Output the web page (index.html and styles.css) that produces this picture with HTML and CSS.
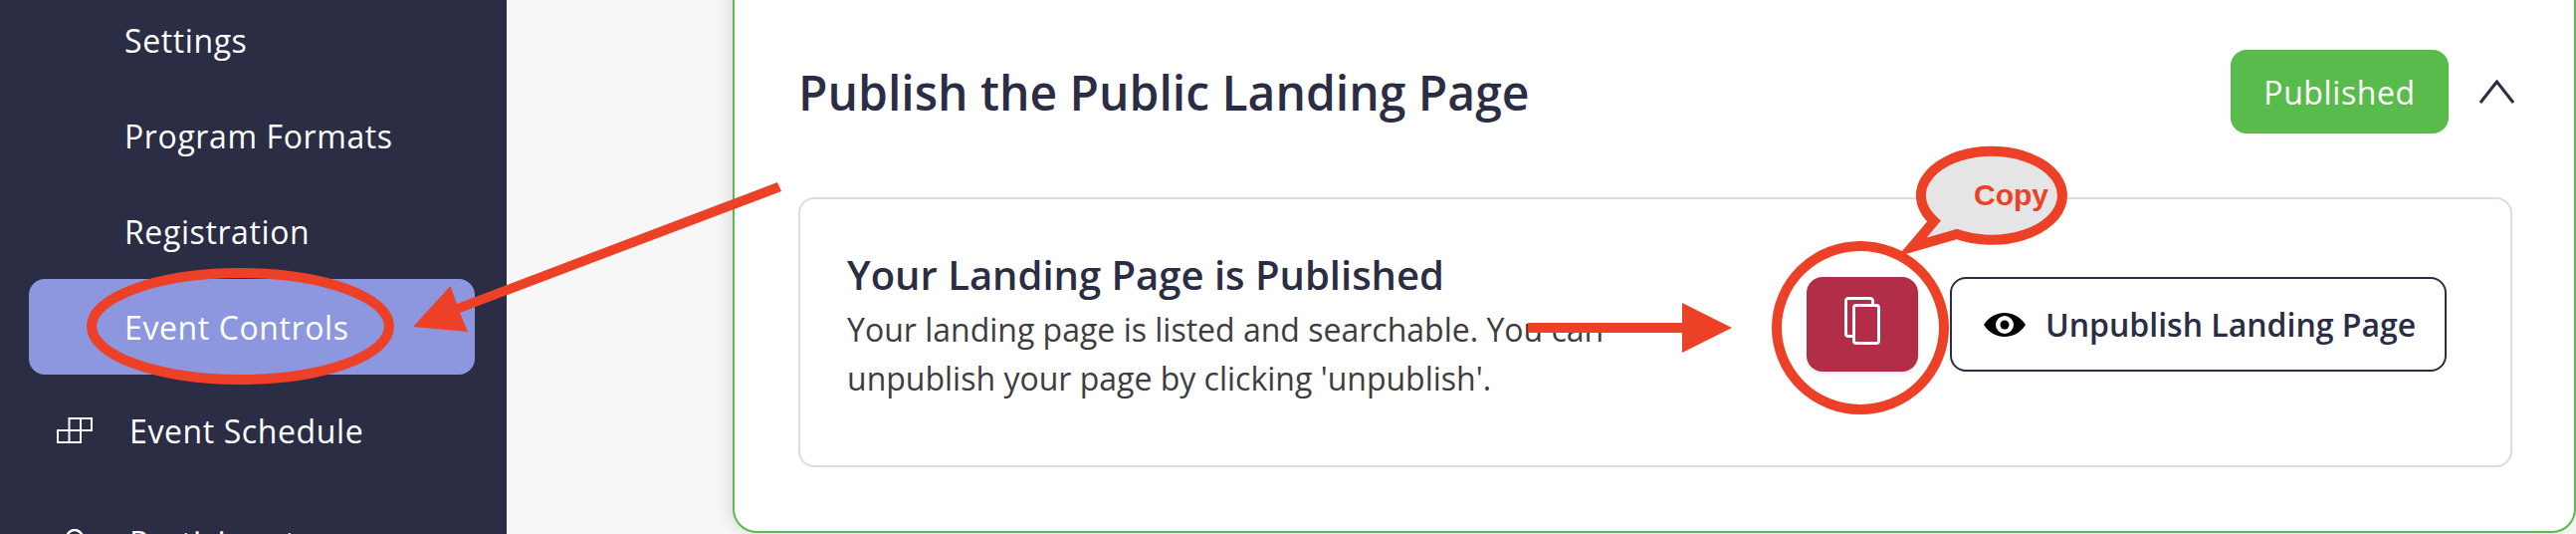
FILE: index.html
```html
<!DOCTYPE html>
<html lang="en">
<head>
    <meta charset="UTF-8">
    <title>Publish the Public Landing Page</title>
    <link rel="stylesheet" href="styles.css">
</head>
<body>
    <div class="page">
        <nav class="sidebar">
            <a class="nav-item">Settings</a>
            <a class="nav-item">Program Formats</a>
            <a class="nav-item">Registration</a>
            <a class="nav-item active">Event Controls</a>
            <a class="nav-item with-icon schedule">
                <svg class="nav-icon" width="36" height="26" viewBox="0 0 36 26" fill="none" stroke="#fff" stroke-width="2">
                    <path d="M1 13h23v12H1zM12.500 1h22.500v12H12.500zM12.500 1v24M24 1v12"/>
                </svg>
                Event Schedule
            </a>
            <a class="nav-item with-icon participants">
                <svg class="nav-icon" width="36" height="26" viewBox="0 0 36 26" fill="none" stroke="#fff" stroke-width="2.500">
                    <circle cx="18" cy="9" r="8"/>
                </svg>
                Participants
            </a>
        </nav>

        <main class="content">
            <section class="card">
                <header class="card-header">
                    <h1>Publish the Public Landing Page</h1>
                    <div class="header-right">
                        <span class="badge">Published</span>
                        <svg class="chevron" width="35" height="24" viewBox="0 0 35 24" fill="none" stroke="#2a2d43" stroke-width="3">
                            <path d="M1 23L17.500 2L34 23"/>
                        </svg>
                    </div>
                </header>

                <div class="panel">
                    <div class="panel-text">
                        <h2>Your Landing Page is Published</h2>
                        <p>Your landing page is listed and searchable. You can unpublish your page by clicking 'unpublish'.</p>
                    </div>
                    <div class="actions">
                        <button class="copy-btn">
                            <svg class="copy-icon" width="36" height="48" viewBox="0 0 36 48" fill="none" stroke="#fff" stroke-width="3">
                                <path d="M9 39.500H4a2.500 2.500 0 0 1-2.500-2.500V4A2.500 2.500 0 0 1 4 1.500h22A2.500 2.500 0 0 1 28.500 4v4"/>
                                <rect x="9.500" y="8.500" width="25" height="38" rx="2.500"/>
                            </svg>
                        </button>
                        <button class="unpublish-btn">
                            <svg width="42" height="24" viewBox="0 0 42 24">
                                <path fill-rule="evenodd" fill="#000" d="M0 12C5 4 13 0 21 0s16 4 21 12c-5 8-13 12-21 12S5 20 0 12zm21-9a9 9 0 1 0 0 18 9 9 0 0 0 0-18z"/>
                                <circle cx="21" cy="12" r="4.500" fill="#000"/>
                            </svg>
                            Unpublish Landing Page
                        </button>
                    </div>
                </div>
            </section>
        </main>
    </div>

    <!-- red annotations drawn on top of the screenshot -->
    <svg class="annotations" width="2588" height="536" viewBox="0 0 2588 536">
        <ellipse cx="241.500" cy="327.500" rx="149.500" ry="53.500" fill="none" stroke="#ec4126" stroke-width="10"/>
        <path fill="#ec4126" d="M781 183L785 192L462 314L470 333L415 328L452.500 287L459 305z"/>
        <path fill="#ec4126" d="M1535 324H1690V304L1740 329L1690 354V334H1535z"/>
        <ellipse cx="1869" cy="329" rx="84" ry="82" fill="none" stroke="#ec4126" stroke-width="10"/>
        <path fill="#e5e5e5" stroke="#ec4126" stroke-width="10" stroke-linejoin="miter" d="M1943 222A71 44.500 0 1 1 1966 235L1921 248z"/>
        <text class="copy-label" x="1983" y="206">Copy</text>
    </svg>
</body>
</html>
```

FILE: styles.css
```css
* {
    box-sizing: border-box;
}
html, body {
    margin: 0;
    height: 100%;
    overflow: hidden;
}
body {
    font-family: "Open Sans", sans-serif;
    color: #2a2d43;
    background-color: #f7f7f7;
    position: relative;
}
.page {
    display: flex;
    height: 536px;
    overflow: hidden;
}
.sidebar {
    flex: 0 0 509px;
    background-color: #2a2d43;
    display: flex;
    flex-direction: column;
    overflow: hidden;
}
.nav-item {
    flex: 0 0 96px;
    display: flex;
    align-items: center;
    padding-left: 125px;
    color: #fff;
    font-size: 32px;
    font-weight: 500;
    letter-spacing: 0.6px;
}
.nav-item:first-child {
    margin-top: -8px;
}
.nav-item.active {
    background-color: #8c97e0;
    border-radius: 16px;
    margin-left: 29px;
    margin-right: 32px;
    padding-left: 96px;
}
.nav-item.with-icon {
    padding-left: 57px;
    gap: 37px;
}
.nav-item.schedule {
    margin-top: 8px;
}
.nav-item.participants {
    margin-top: 16px;
}
.content {
    flex: 1;
    padding-left: 227px;
    min-width: 0;
}
.card {
    height: 565px;
    margin-top: -30px;
    padding: 78px 62px 0 64px;
    background-color: #fff;
    border: 2px solid #59bb4b;
    border-radius: 24px;
    box-shadow: -4px 0 16px rgba(0, 0, 0, 0.1);
}
.card-header {
    display: flex;
    justify-content: space-between;
    align-items: center;
    height: 84px;
    margin-right: -2px;
}
h1 {
    margin: 0;
    font-size: 48px;
    font-weight: 600;
}
.header-right {
    display: flex;
    align-items: center;
    gap: 31px;
}
.badge {
    display: flex;
    align-items: center;
    justify-content: center;
    width: 219px;
    height: 84px;
    background-color: #59bb4b;
    border-radius: 16px;
    color: #fff;
    font-size: 32px;
    font-weight: 500;
    letter-spacing: 0.6px;
}
.panel {
    display: flex;
    justify-content: space-between;
    align-items: flex-start;
    height: 271px;
    margin-top: 64px;
    padding: 46px 64px 0 47px;
    border: 2px solid #dcdcdc;
    border-radius: 16px;
}
.panel-text {
    width: 800px;
}
h2 {
    margin: 0;
    font-size: 40px;
    font-weight: 600;
    line-height: 60px;
}
.panel-text p {
    margin: 0;
    font-size: 32px;
    line-height: 49px;
    color: #3d3d3d;
}
.actions {
    display: flex;
    gap: 32px;
    margin-top: 32px;
}
button {
    font-family: inherit;
    height: 95px;
    border-radius: 16px;
    display: flex;
    align-items: center;
}
.copy-btn {
    width: 112px;
    justify-content: center;
    background-color: #b22d47;
    border: none;
    box-shadow: 0 3px 4px rgba(0, 0, 0, 0.08);
}
.copy-icon {
    margin-bottom: 8px;
}
.unpublish-btn {
    width: 499px;
    padding-left: 32px;
    gap: 20px;
    background-color: #fff;
    border: 2px solid #2a2d43;
    color: #2a2d43;
    font-size: 32px;
    font-weight: 600;
}
.annotations {
    position: absolute;
    left: 0;
    top: 0;
}
.copy-label {
    font-family: "Liberation Sans", sans-serif;
    font-size: 30px;
    font-weight: 700;
    fill: #ec4126;
}
```
